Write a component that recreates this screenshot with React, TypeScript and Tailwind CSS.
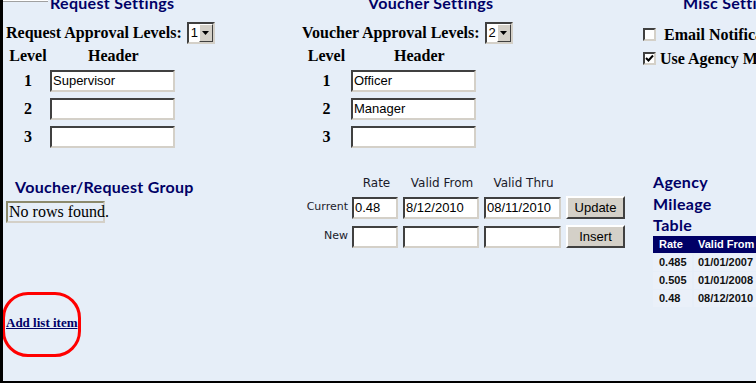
import React from 'react';

const heading = "font-['Lato',sans-serif] font-bold text-[16px] tracking-[0.3px] text-[#000066]";
const serifBold = "font-['Liberation_Serif',serif] font-bold text-[16px] text-black";
const inset =
  'border-2 border-t-[#404040] border-l-[#404040] border-b-[#d4d0c8] border-r-[#d4d0c8] bg-white';

const TextBox: React.FC<{ value?: string; w: string }> = ({ value, w }) => (
  <div
    className={`${inset} ${w} h-[22px] px-[1px] flex items-center font-['Liberation_Sans',sans-serif] text-[13px] text-black`}
  >
    {value}
  </div>
);

const Select: React.FC<{ value: string }> = ({ value }) => (
  <div className={`${inset} w-[28px] h-[22px] flex items-stretch`}>
    <div className="flex-1 flex items-center pl-[2px] font-['Liberation_Sans',sans-serif] text-[13px]">{value}</div>
    <div className="w-[14px] bg-[#d4d0c8] border border-t-white border-l-white border-b-[#404040] border-r-[#404040] flex items-center justify-center">
      <svg width="7" height="4" viewBox="0 0 7 4">
        <path d="M0 0h7L3.5 4z" fill="#000" />
      </svg>
    </div>
  </div>
);

const LevelTable: React.FC<{
  label: string;
  level: string;
  levelW: string;
  values: string[];
  headerPad: string;
}> = ({ label, level, levelW, values, headerPad }) => (
  <div>
    <div className="flex items-center gap-[5px] h-[23px] mt-[8px]">
      <span className={serifBold}>{label}</span>
      <Select value={level} />
    </div>
    <div className={`flex items-center h-[20px] mt-[2px] ${serifBold}`}>
      <div className={`${levelW} text-center`}>Level</div>
      <div className={headerPad}>Header</div>
    </div>
    <div className="flex flex-col gap-[6px] mt-[4px]">
      {values.map((v, i) => (
        <div key={i} className="flex items-center h-[22px]">
          <div className={`${levelW} text-center leading-[22px] ${serifBold}`}>{i + 1}</div>
          <TextBox value={v} w="w-[125px]" />
        </div>
      ))}
    </div>
  </div>
);

const Button: React.FC<{ label: string }> = ({ label }) => (
  <div className="w-[59px] h-[23px] bg-[#d4d0c8] border-2 border-t-white border-l-white border-b-[#404040] border-r-[#404040] flex items-center justify-center font-['Liberation_Sans',sans-serif] text-[13px] text-black">
    {label}
  </div>
);

export default function App() {
  const rates = [
    ['0.485', '01/01/2007'],
    ['0.505', '01/01/2008'],
    ['0.48', '08/12/2010'],
  ];
  return (
    <div className="w-[756px] h-[383px] bg-[#e6eef8] border-l-[3px] border-b-[2px] border-black overflow-hidden relative">
      <div className="absolute top-0 left-0 w-[45px] h-[2px] bg-white border-b border-[#a0a0a0]" />

      <div className="flex -mt-[7px] pl-[3px]">
        <div className="w-[296px] shrink-0">
          <div className={`${heading} leading-[20px] pl-[44px]`}>Request Settings</div>
          <LevelTable
            label="Request Approval Levels:"
            level="1"
            levelW="w-[44px]"
            headerPad="pl-[38px]"
            values={['Supervisor', '', '']}
          />
        </div>
        <div className="w-[341px] shrink-0">
          <div className={`${heading} leading-[20px] pl-[66px]`}>Voucher Settings</div>
          <LevelTable
            label="Voucher Approval Levels:"
            level="2"
            levelW="w-[49px]"
            headerPad="pl-[43px]"
            values={['Officer', 'Manager', '']}
          />
        </div>
        <div className="shrink-0 whitespace-nowrap">
          <div className={`${heading} leading-[20px] pl-[40px]`}>Misc Settings</div>
          <div className="flex flex-col gap-[11px] mt-[15px]">
            <div className="flex items-center h-[13px]">
              <div className={`${inset} w-[13px] h-[13px]`} />
              <span className={`${serifBold} ml-[8px]`}>Email Notifications</span>
            </div>
            <div className="flex items-center h-[13px]">
              <div className={`${inset} w-[13px] h-[13px] flex items-center justify-center`}>
                <svg width="9" height="9" viewBox="0 0 9 9">
                  <path d="M1 4l2.5 2.5L8 1.5" stroke="#000" strokeWidth="2" fill="none" />
                </svg>
              </div>
              <span className={`${serifBold} ml-[4px]`}>Use Agency Mileage</span>
            </div>
          </div>
        </div>
      </div>

      <div className="flex mt-[29px] pl-[3px]">
        <div className="w-[296px] shrink-0">
          <div className={`${heading} leading-[20px] pl-[9px]`}>Voucher/Request Group</div>
          <div className="mt-[4px] w-[99px] h-[22px] whitespace-nowrap border-2 border-t-[#8c8a6c] border-l-[#8c8a6c] border-b-[#d4d0c8] border-r-[#d4d0c8] flex items-center pl-[1px] font-['Liberation_Serif',serif] text-[16px] text-black">
            No rows found.
          </div>
          <div className="relative mt-[86px] w-fit">
            <a href="#" className="font-['Liberation_Serif',serif] font-bold text-[13px] text-[#000066] underline">
              Add list item
            </a>
            <div className="absolute -left-[4px] -top-[17px] w-[79px] h-[65px] border-[3px] border-[#ff0000] rounded-[26px]" />
          </div>
        </div>

        <div className="w-[341px] shrink-0 font-['DejaVu_Sans',sans-serif] text-[11px] text-[#1a1a2a]">
          <div className="flex items-center h-[14px] -mt-[1px] text-[12px]">
            <div className="w-[51px]" />
            <div className="w-[47px] text-center">Rate</div>
            <div className="w-[84px] text-center">Valid From</div>
            <div className="w-[79px] text-center">Valid Thru</div>
          </div>
          <div className="flex flex-col gap-[6px] mt-[6px]">
            {[
              ['Current', '0.48', '8/12/2010', '08/11/2010', 'Update'],
              ['New', '', '', '', 'Insert'],
            ].map((r) => (
              <div key={r[0]} className="flex items-center">
                <div className="w-[47px] text-right pr-[1px]">{r[0]}</div>
                <div className="ml-[3px]">
                  <TextBox value={r[1]} w="w-[46px]" />
                </div>
                <div className="ml-[5px]">
                  <TextBox value={r[2]} w="w-[76px]" />
                </div>
                <div className="ml-[5px]">
                  <TextBox value={r[3]} w="w-[77px]" />
                </div>
                <div className="ml-[5px]">
                  <Button label={r[4]} />
                </div>
              </div>
            ))}
          </div>
        </div>

        <div className="flex-1 whitespace-nowrap pl-[10px]">
          <div className={`${heading} leading-[21.5px] -mt-[6px]`}>
            <div>Agency</div>
            <div>Mileage</div>
            <div>Table</div>
          </div>
          <div className="mt-[0px] font-['Liberation_Sans',sans-serif] font-bold text-[11px]">
            <div className="flex h-[17px] bg-[#000066] text-white items-center">
              <div className="w-[41px] pl-[6px]">Rate</div>
              <div className="pl-[4px]">Valid From</div>
            </div>
            {rates.map((r) => (
              <div key={r[0]} className="flex h-[17px] mt-[1px] text-[#111]">
                <div className="w-[39px] bg-[#eaf0f9] flex items-center pl-[6px]">{r[0]}</div>
                <div className="flex-1 ml-[2px] bg-[#eaf0f9] flex items-center pl-[4px]">{r[1]}</div>
              </div>
            ))}
          </div>
        </div>
      </div>
    </div>
  );
}
